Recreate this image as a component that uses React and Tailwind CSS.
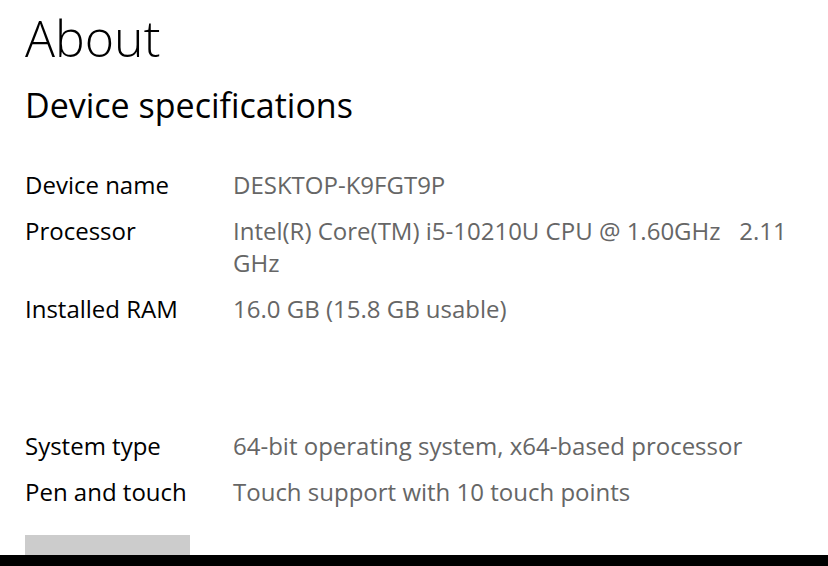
import React from 'react';

const specs = [
  { label: 'Device name', value: 'DESKTOP-K9FGT9P' },
  { label: 'Processor', value: 'Intel(R) Core(TM) i5-10210U CPU @ 1.60GHz   2.11\nGHz' },
  { label: 'Installed RAM', value: '16.0 GB (15.8 GB usable)' },
];

const more = [
  { label: 'System type', value: '64-bit operating system, x64-based processor' },
  { label: 'Pen and touch', value: 'Touch support with 10 touch points' },
];

function SpecRow({ label, value }) {
  return (
    <div className="flex text-[24px] leading-[32px]">
      <div className="w-[208px] shrink-0 text-black">{label}</div>
      <div className="text-[#666666] whitespace-pre">{value}</div>
    </div>
  );
}

export default function App() {
  return (
    <div
      className="h-[566px] w-[828px] bg-white flex flex-col overflow-hidden"
      style={{ fontFamily: '"Open Sans", "Noto Sans", sans-serif' }}
    >
      <div className="flex-1 pl-[25px]">
        <h1 className="text-[50px] leading-[60px] font-light text-black pt-[8px]">About</h1>
        <h2 className="text-[34px] leading-[40px] text-black mt-[17px]">Device specifications</h2>

        <div className="flex flex-col gap-[14px] mt-[44px]">
          {specs.map((s) => (
            <SpecRow key={s.label} {...s} />
          ))}
          <div className="h-[77px]" />
          {more.map((s) => (
            <SpecRow key={s.label} {...s} />
          ))}
        </div>

        <div className="mt-[27px] w-[165px] h-[20px] bg-[#cccccc]" />
      </div>
      <div className="h-[11px] bg-black shrink-0" />
    </div>
  );
}
